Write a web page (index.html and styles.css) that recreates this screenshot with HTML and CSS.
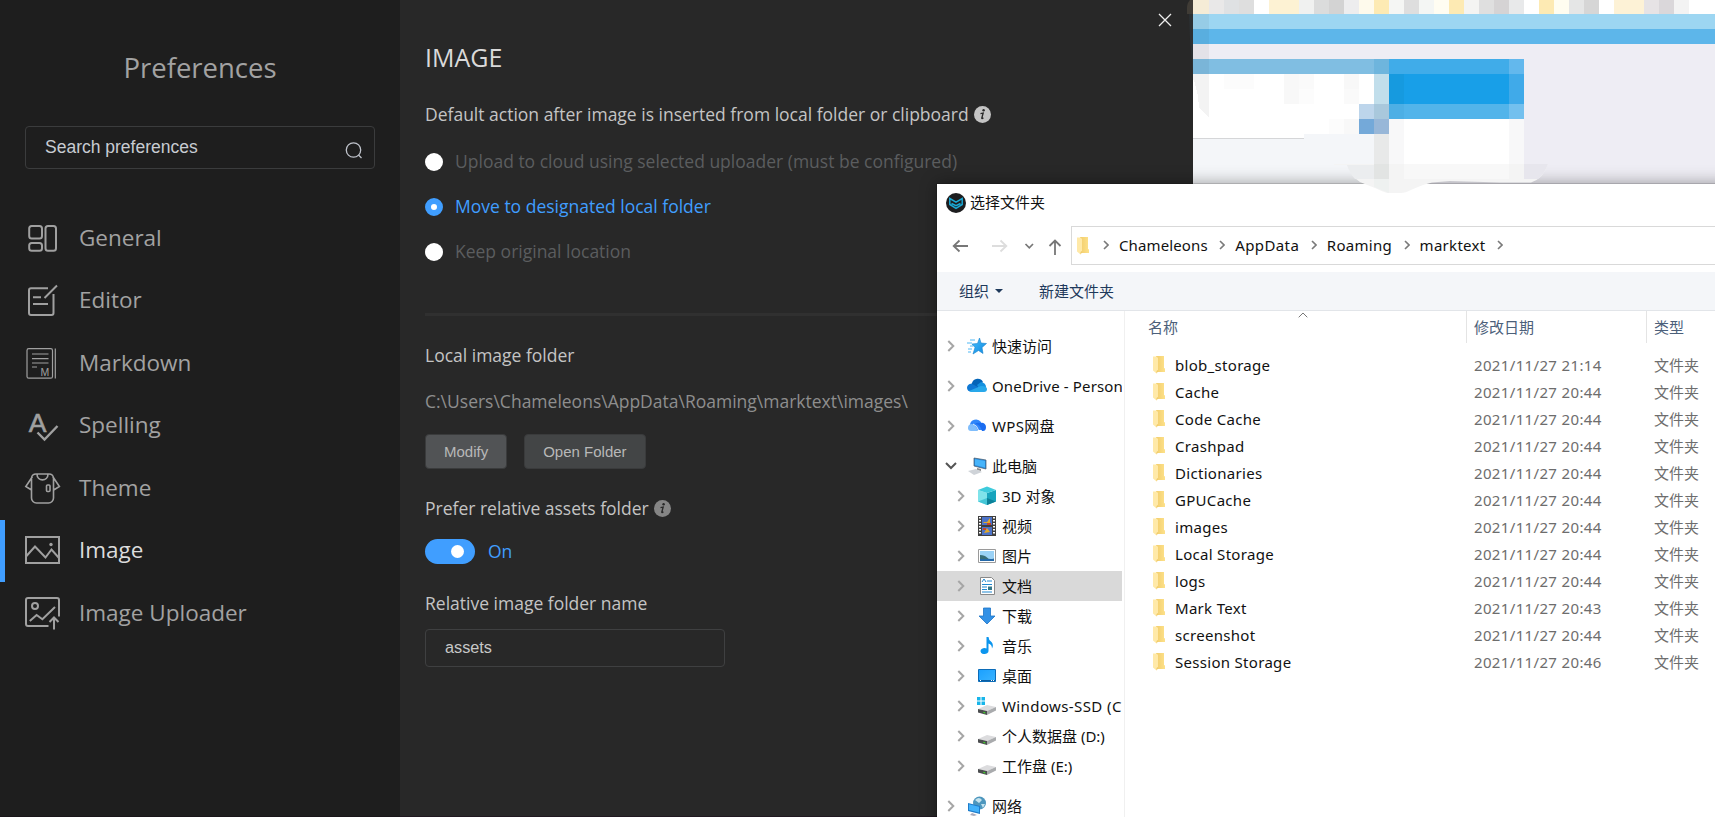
FILE: index.html
```html
<!DOCTYPE html>
<html lang="zh-CN">
<head>
<meta charset="utf-8">
<title>Preferences</title>
<link rel="stylesheet" href="styles.css">
</head>
<body>
<svg class="defs" aria-hidden="true">
  <defs>
    <linearGradient id="gf" x1="0" y1="0" x2="1" y2="0"><stop offset="0" stop-color="#f2cd6c"/><stop offset="1" stop-color="#fde18a"/></linearGradient>
    <linearGradient id="gs" x1="0" y1="0" x2="1" y2="1"><stop offset="0" stop-color="#45c0ff"/><stop offset="1" stop-color="#0f86dd"/></linearGradient>
    <linearGradient id="gd" x1="0" y1="0" x2="1" y2="1"><stop offset="0" stop-color="#1aa0ff"/><stop offset="1" stop-color="#3cb4ff"/></linearGradient>
  </defs>
  <symbol id="folder" viewBox="0 0 12 18"><path d="M3 0h8v12l1 .5V16H3z" fill="url(#gf)"/><path d="M0 0.5h3.5L5 2v12L3.500 17.500 0 14.500z" fill="#ffe9a8"/><path d="M3.500 15l1.500-1v1.500l-1.500 2z" fill="#f0cb6a"/></symbol>
  <symbol id="right" viewBox="0 0 8 12"><path d="M1.300 1l5 5-5 5" fill="none" stroke="currentColor" stroke-width="2"/></symbol>
  <symbol id="crumb" viewBox="0 0 6 10"><path d="M1 1l4 4-4 4" fill="none" stroke="#7a7a7a" stroke-width="1.600"/></symbol>
  <symbol id="drive" viewBox="0 0 20 20"><path d="M1 13l9-4 9 2-9 4z" fill="#dcdcde"/><path d="M1 13l9 2V19L1 16.500z" fill="#4b4d4f"/><path d="M10 15l9-4v3.500L10 19z" fill="#a9abad"/><path d="M6.300 15.700l2 .5v1.400l-2-.5z" fill="#42d62c"/></symbol>
  <symbol id="info" viewBox="0 0 17 17"><circle cx="8.500" cy="8.500" r="8.500" fill="currentColor"/><circle cx="9.600" cy="4.300" r="1.200" fill="#282828"/><path d="M6.500 7.600l2.700-.6-1.400 5q-.2 1.200 1.600-.3" fill="none" stroke="#282828" stroke-width="1.300"/></symbol>
</svg>

<div class="desktop">
  <aside class="sidebar">
    <h1 class="title">Preferences</h1>
    <div class="search"><span>Search preferences</span>
      <svg class="search-icon" viewBox="0 0 18 18"><circle cx="8.500" cy="8" r="7.200"/><path d="M13.500 13l3 3"/></svg>
    </div>
    <nav class="menu">
      <div class="item"><svg class="mi" viewBox="0 0 38 38"><rect x="5.200" y="7" width="12.800" height="12.500" rx="2.500"/><rect x="5.200" y="24" width="12.800" height="7.800" rx="2.500"/><rect x="21.500" y="7" width="10.500" height="24.800" rx="2.500"/></svg><span>General</span></div>
      <div class="item"><svg class="mi" viewBox="0 0 38 38"><path d="M24 6.200H7a2 2 0 0 0-2 2V31a2 2 0 0 0 2 2h20.500a2 2 0 0 0 2-2V12M20.500 16L33 3.500M9 15.200h8M9 22h15"/></svg><span>Editor</span></div>
      <div class="item"><svg class="mi thin" viewBox="0 0 38 38"><rect x="3" y="4.700" width="25.500" height="29.500" rx="1.800"/><path d="M31.300 4.500v30M8 10h16.500M8 14.700h16.500M8 19h16.500M8 23h5"/><text x="16.500" y="32" font-size="10.500">M</text></svg><span>Markdown</span></div>
      <div class="item"><svg class="mi" viewBox="0 0 38 38"><text x="4.700" y="24.500" font-size="26.500" class="spell">A</text><path d="M13.500 25.500l7 7L33.500 19" stroke-width="2.400"/></svg><span>Spelling</span></div>
      <div class="item"><svg class="mi mid" viewBox="0 0 38 38"><path d="M12 5h13q4 0 4.500 4v20a5 5 0 0 1-5 5h-12a5 5 0 0 1-5-5V9Q8 5 12 5zM8.500 7.500L1.800 17.500 7.500 21M28.700 7.500l6.700 10-5.700 3.500M13 5.200c0 7.500 11 7.500 11 0"/><rect x="22.500" y="16" width="3.500" height="6.500" rx="1"/></svg><span>Theme</span></div>
      <div class="item active"><svg class="mi" viewBox="0 0 38 38"><rect x="2" y="5" width="33" height="26"/><path d="M2 24.500L11 14.500l10.500 11 6-8L35 26"/><circle cx="27" cy="12.500" r="1.700" class="dot"/></svg><span>Image</span></div>
      <div class="item"><svg class="mi" viewBox="0 0 38 38"><path d="M24.500 32H4a2 2 0 0 1-2-2V6a2 2 0 0 1 2-2h29a2 2 0 0 1 2 2v16.500M5.800 27l6.800-6 5.800 4.300L31 13M30 35.500V23.500M25.500 28l4.500-4.500 4.500 4.500"/><circle cx="11" cy="12" r="3"/></svg><span>Image Uploader</span></div>
    </nav>
  </aside>

  <main class="main">
    <svg class="close" viewBox="0 0 14 14"><path d="M1 1l12 12M13 1L1 13"/></svg>
    <h2 class="heading">IMAGE</h2>
    <div class="label first"><span>Default action after image is inserted from local folder or clipboard</span><svg class="info light"><use href="#info"/></svg></div>
    <div class="radios">
      <div class="radio"><i></i><span>Upload to cloud using selected uploader (must be configured)</span></div>
      <div class="radio on"><i></i><span>Move to designated local folder</span></div>
      <div class="radio"><i></i><span>Keep original location</span></div>
    </div>
    <div class="rule"></div>
    <div class="label local">Local image folder</div>
    <div class="label path">C:\Users\Chameleons\AppData\Roaming\marktext\images\</div>
    <div class="buttons"><div class="btn hover">Modify</div><div class="btn">Open Folder</div></div>
    <div class="label prefer"><span>Prefer relative assets folder</span><svg class="info"><use href="#info"/></svg></div>
    <div class="toggle"><div class="switch"><i></i></div><span>On</span></div>
    <div class="label relative">Relative image folder name</div>
    <div class="input">assets</div>
  </main>

  <svg class="backdrop" viewBox="1193 0 522 184" shape-rendering="crispEdges">
    <rect x="1193" y="0" width="522" height="184" fill="#eeedf4"/>
    <g>
      <rect x="1193" width="16" height="14" fill="#f5ecd6"/><rect x="1209" width="15" height="14" fill="#e9e8e8"/><rect x="1224" width="15" height="14" fill="#dfe1e3"/><rect x="1239" width="15" height="14" fill="#dedede"/><rect x="1254" width="15" height="14" fill="#fff"/><rect x="1269" width="30" height="14" fill="#fdf2d3"/><rect x="1299" width="15" height="14" fill="#f0f1f0"/><rect x="1314" width="15" height="14" fill="#dbdcdc"/><rect x="1329" width="15" height="14" fill="#d3d3d3"/><rect x="1344" width="15" height="14" fill="#ededee"/><rect x="1359" width="15" height="14" fill="#fefaec"/><rect x="1374" width="15" height="14" fill="#fdeab3"/><rect x="1389" width="15" height="14" fill="#f5f6f4"/><rect x="1404" width="15" height="14" fill="#dedede"/><rect x="1419" width="15" height="14" fill="#f4f6f4"/><rect x="1434" width="15" height="14" fill="#fffdf2"/><rect x="1449" width="15" height="14" fill="#fdeab3"/><rect x="1464" width="15" height="14" fill="#f4f4f2"/><rect x="1479" width="15" height="14" fill="#dfdfdf"/><rect x="1494" width="15" height="14" fill="#d5d3d4"/><rect x="1509" width="15" height="14" fill="#e8e9ea"/><rect x="1524" width="15" height="14" fill="#fff"/><rect x="1539" width="15" height="14" fill="#fdeab3"/><rect x="1554" width="15" height="14" fill="#fffdf0"/><rect x="1569" width="15" height="14" fill="#e5e6e6"/><rect x="1584" width="15" height="14" fill="#d6d6d6"/><rect x="1599" width="15" height="14" fill="#fff"/><rect x="1614" width="30" height="14" fill="#fdf2d6"/><rect x="1644" width="15" height="14" fill="#e6e3e5"/><rect x="1659" width="15" height="14" fill="#dad7da"/><rect x="1674" width="15" height="14" fill="#f3f3f3"/><rect x="1689" width="26" height="14" fill="#fff"/>
    </g>
    <rect x="1193" y="14" width="522" height="15" fill="#9dd6f2"/><rect x="1193" y="14" width="16" height="15" fill="#96cce6"/>
    <rect x="1193" y="29" width="522" height="15" fill="#5db6ea"/><rect x="1193" y="29" width="16" height="15" fill="#59aedf"/>
    <rect x="1193" y="44" width="16" height="15" fill="#e3e2e8"/>
    <rect x="1193" y="59" width="181" height="15" fill="#80bee2"/><rect x="1193" y="59" width="16" height="15" fill="#7ab5d8"/><rect x="1374" y="59" width="15" height="15" fill="#6eb5dd"/>
    <rect x="1193" y="74" width="181" height="64" fill="#fff"/>
    <path d="M1193 80h1l4 16 1 12 10 10V74h-16z" fill="#f3f3f3"/>
    <path d="M1224 74h30v15h-30zM1299 89h15v15h-15zM1329 119h15v15h-15z" fill="#fcfcfc"/><path d="M1284 74h15v30h-15zM1344 74h15v15h-15zM1344 119h15v15h-15z" fill="#f8f8f8"/><path d="M1299 74h15v15h-15zM1344 89h15v15h-15z" fill="#fafafa"/>
    <rect x="1193" y="138" width="196" height="46" fill="#f4f6f9"/><rect x="1304" y="134" width="70" height="4" fill="#f4f6f9"/><rect x="1193" y="138" width="111" height="1" fill="#d5d6d8"/>
    <rect x="1374" y="74" width="15" height="30" fill="#c1deeb"/><rect x="1359" y="104" width="15" height="15" fill="#bdd5eb"/><rect x="1374" y="104" width="15" height="15" fill="#a9c8dc"/><rect x="1359" y="119" width="15" height="15" fill="#74a9d9"/><rect x="1374" y="119" width="15" height="15" fill="#98b7d8"/><rect x="1374" y="134" width="15" height="45" fill="#e8e9e9"/>
    <rect x="1389" y="59" width="120" height="15" fill="#40ace9"/><rect x="1389" y="74" width="120" height="30" fill="#189fe8"/><rect x="1389" y="74" width="15" height="30" fill="#169adf"/><rect x="1389" y="104" width="120" height="15" fill="#52b4ea"/><rect x="1389" y="104" width="15" height="15" fill="#4dafe5"/>
    <rect x="1509" y="59" width="15" height="15" fill="#63b8ed"/><rect x="1509" y="74" width="15" height="30" fill="#40aae9"/><rect x="1509" y="104" width="15" height="15" fill="#73c0ee"/>
    <rect x="1389" y="119" width="135" height="60" fill="#fff"/><rect x="1389" y="119" width="15" height="60" fill="#f8f8f9"/><rect x="1509" y="119" width="15" height="60" fill="#f8f8f9"/>
  </svg>

  <section class="dialog">
    <header class="titlebar"><svg class="logo" viewBox="0 0 20 20"><circle cx="10" cy="10" r="10" fill="#1d1d1f"/><path d="M3.800 5.500l6.200 3.700 6.200-3.700v6L10 15.300l-6.200-3.800zM5.500 10.500l4.500 2.200 4.500-2.200" fill="none" stroke="#1ba9d5" stroke-width="1.500"/></svg><span>选择文件夹</span></header>
    <div class="addressrow">
      <svg class="arrows" viewBox="0 0 134 38" fill="none"><path d="M31 20H16.500M22.500 14.500L16.700 20l5.800 5.500" stroke="#777" stroke-width="1.800"/><path d="M55 20h14.500M63.500 14.500l5.800 5.500-5.800 5.500" stroke="#ddd" stroke-width="1.800"/><path d="M88.500 18l3.800 3.800L96 18" stroke="#777" stroke-width="1.700"/><path d="M118 29V14.500M112.500 20l5.500-5.500 5.500 5.500" stroke="#777" stroke-width="1.800"/></svg>
      <div class="address"><svg class="folder"><use href="#folder"/></svg><svg class="crumb c0"><use href="#crumb"/></svg><span class="a1">Chameleons</span><svg class="crumb"><use href="#crumb"/></svg><span class="a2">AppData</span><svg class="crumb"><use href="#crumb"/></svg><span class="a3">Roaming</span><svg class="crumb"><use href="#crumb"/></svg><span class="a4">marktext</span><svg class="crumb"><use href="#crumb"/></svg></div>
    </div>
    <div class="toolbar"><span>组织</span><i class="tri"></i><span class="new">新建文件夹</span></div>
    <div class="body">
      <nav class="tree">
        <div class="node root"><svg class="exp"><use href="#right"/></svg><svg class="ti" viewBox="0 0 20 20"><path d="M3 4h5M0 7h5M3 10h3M1 13h4M1 16h3" stroke="#4fb8f5" stroke-width="1"/><path d="M12.500 2l1.500 5 5.500.5-4.500 4 1 6-4.500-3-5.500 3.500 2-6.500-3-3.500 5.500-.5z" fill="url(#gs)" stroke="#1582cc" stroke-width=".6"/></svg><span>快速访问</span></div>
        <div class="node root"><svg class="exp"><use href="#right"/></svg><svg class="ti" viewBox="0 0 20 20"><path d="M4 14.500A6 6 0 0 1 5 7a6 6 0 0 1 11-1l-5 5z" fill="#0364b8"/><path d="M0 12a4 4 0 0 1 5-4l8 4-5 3.500H4a4 4 0 0 1-4-3.500z" fill="#0f78d4"/><path d="M10 9l4-3q5 1 5 5l-6 3z" fill="#1490df"/><path d="M2 15l12-5q6 0 6 3a3 3 0 0 1-3 3H4z" fill="#28a8ea"/></svg><span class="od">OneDrive - Person</span></div>
        <div class="node root"><svg class="exp"><use href="#right"/></svg><svg class="ti" viewBox="0 0 20 20"><path d="M3 9a6 5.500 0 0 1 11-3l3 8H5z" fill="#2f86fa"/><path d="M1 12q0-4 4-4 4 1 6 7H4q-3 0-3-3z" fill="#7fbdfc"/><path d="M8 8q5 0 7 7h1q3 0 3-4a4 4 0 0 0-5-4q-4-1-6 1z" fill="#1a6cf0"/><path d="M6 8q4 1 6 7" fill="none" stroke="#fff" stroke-width=".8"/></svg><span class="wps">WPS网盘</span></div>
        <div class="node root"><svg class="exp open" viewBox="0 0 12 8"><path d="M1 1l5 5 5-5" fill="none" stroke="#555" stroke-width="2"/></svg><svg class="ti" viewBox="0 0 20 20"><path d="M7 2l12 2v9L7 10z" fill="#2a8fe0" stroke="#456" stroke-width=".7"/><path d="M8 3.200l10 1.700v6.500L8 9z" fill="#47b4fa"/><path d="M10 12l4 1v2l-4-1z" fill="#888"/><path d="M1 15l8-2 6 3-8 3z" fill="#cfd3d8"/></svg><span>此电脑</span></div>
        <div class="node"><svg class="exp"><use href="#right"/></svg><svg class="ti" viewBox="0 0 20 20"><path d="M1 4l9 3v12l-9-3.500z" fill="#7fe3ea"/><path d="M10 7l9-3v11.500L10 19z" fill="#18a4bd"/><path d="M1 4l9-3.500L19 4l-9 3z" fill="#3ecbdc"/><path d="M1 15.500l9-3.500v7z" fill="#45c6d6"/><path d="M10 12l9 3.500L10 19z" fill="#0c8199"/></svg><span>3D 对象</span></div>
        <div class="node"><svg class="exp"><use href="#right"/></svg><svg class="ti" viewBox="0 0 20 20"><path d="M1 0h18v20H1z" fill="#3f3f3f"/><path d="M5 1h10v8H5z" fill="#4c73c9"/><path d="M5 11h10v8H5z" fill="#4c73c9"/><path d="M6 6h4l3-4v5H7zM7 17l3-5 3 4z" fill="#e1a82b"/><path d="M10 7h4v2h-4zM6 12h3v2H6z" fill="#c7432d"/><path d="M3 1v18M17 1v18" stroke="#fff" stroke-width="2" stroke-dasharray="1.500 1.500"/></svg><span>视频</span></div>
        <div class="node"><svg class="exp"><use href="#right"/></svg><svg class="ti" viewBox="0 0 20 20"><path d="M1.500 3.500h17v13h-17z" fill="#fff" stroke="#9a9a9a"/><path d="M3 5h14v10H3z" fill="#9bd2f6"/><path d="M3 9q5 0 7 2.500t7 1V15H3z" fill="#386c76"/><path d="M3 13h14v2H3z" fill="#2468a8"/></svg><span>图片</span></div>
        <div class="node selected"><svg class="exp"><use href="#right"/></svg><svg class="ti" viewBox="0 0 20 20"><path d="M3.500 1.500h11l3 3v14h-14z" fill="#fff" stroke="#888"/><path d="M5 6l2-3 2 3M10 5h5M5 8.500h10M5 11h5M5 13.500h5M5 16h10" stroke="#2088d0" fill="none"/><path d="M11 10.500h4v3.500h-4z" fill="#378"/></svg><span>文档</span></div>
        <div class="node"><svg class="exp"><use href="#right"/></svg><svg class="ti" viewBox="0 0 20 20"><path d="M6.500 2h7v8H18l-8 8-8-8h4.500z" fill="#3391e6" stroke="#1d74c6" stroke-width=".8"/></svg><span>下载</span></div>
        <div class="node"><svg class="exp"><use href="#right"/></svg><svg class="ti" viewBox="0 0 20 20"><path d="M9.500 1h2q0 3 3 5 2.500 3 .5 6.500 0-4-3.500-5v7.500a4 3 0 1 1-2-2.500z" fill="#0b95ee"/></svg><span>音乐</span></div>
        <div class="node"><svg class="exp"><use href="#right"/></svg><svg class="ti" viewBox="0 0 20 20"><path d="M1.500 3.500h17v12h-17z" fill="url(#gd)" stroke="#0c6cb8"/><path d="M2 14.500h16" stroke="#0c5da0"/><path d="M3 14.500h1M14 14.500h1M16 14.500h1" stroke="#fff"/></svg><span>桌面</span></div>
        <div class="node"><svg class="exp"><use href="#right"/></svg><svg class="ti" viewBox="0 0 20 20"><use href="#drive"/><path d="M0 1h3.500v3.500H0zM4.500 1H8v3.500H4.500zM0 5.500h3.500V9H0zM4.500 5.500H8V9H4.500z" fill="#17b5ea"/></svg><span class="win">Windows-SSD (C</span></div>
        <div class="node"><svg class="exp"><use href="#right"/></svg><svg class="ti"><use href="#drive"/></svg><span>个人数据盘 (D:)</span></div>
        <div class="node last"><svg class="exp"><use href="#right"/></svg><svg class="ti"><use href="#drive"/></svg><span>工作盘 (E:)</span></div>
        <div class="node root"><svg class="exp"><use href="#right"/></svg><svg class="ti" viewBox="0 0 20 20"><circle cx="12.500" cy="7" r="6.500" fill="#4d96bd"/><path d="M8 4q4-4 7 0l-3 3zM14 8l4 0-2 4z" fill="#c5e3ee"/><path d="M1 7l12 3v8L1 15z" fill="#1e7cca"/><path d="M2 8.200l10 2.500v5.800L2 14z" fill="#43b2fa"/><path d="M5 17l5 2-3 1-4-1z" fill="#aab"/></svg><span>网络</span></div>
      </nav>
      <div class="list">
        <div class="head"><div class="h name">名称<svg class="caret" viewBox="0 0 10 6"><path d="M.7 5.300L5 1l4.300 4.300"/></svg></div><div class="h date">修改日期</div><div class="h type">类型</div></div>
        <div class="row"><svg class="folder"><use href="#folder"/></svg><span class="n">blob_storage</span><span class="d">2021/11/27 21:14</span><span class="t">文件夹</span></div>
        <div class="row"><svg class="folder"><use href="#folder"/></svg><span class="n">Cache</span><span class="d">2021/11/27 20:44</span><span class="t">文件夹</span></div>
        <div class="row"><svg class="folder"><use href="#folder"/></svg><span class="n">Code Cache</span><span class="d">2021/11/27 20:44</span><span class="t">文件夹</span></div>
        <div class="row"><svg class="folder"><use href="#folder"/></svg><span class="n">Crashpad</span><span class="d">2021/11/27 20:44</span><span class="t">文件夹</span></div>
        <div class="row"><svg class="folder"><use href="#folder"/></svg><span class="n">Dictionaries</span><span class="d">2021/11/27 20:44</span><span class="t">文件夹</span></div>
        <div class="row"><svg class="folder"><use href="#folder"/></svg><span class="n">GPUCache</span><span class="d">2021/11/27 20:44</span><span class="t">文件夹</span></div>
        <div class="row"><svg class="folder"><use href="#folder"/></svg><span class="n">images</span><span class="d">2021/11/27 20:44</span><span class="t">文件夹</span></div>
        <div class="row"><svg class="folder"><use href="#folder"/></svg><span class="n">Local Storage</span><span class="d">2021/11/27 20:44</span><span class="t">文件夹</span></div>
        <div class="row"><svg class="folder"><use href="#folder"/></svg><span class="n">logs</span><span class="d">2021/11/27 20:44</span><span class="t">文件夹</span></div>
        <div class="row"><svg class="folder"><use href="#folder"/></svg><span class="n">Mark Text</span><span class="d">2021/11/27 20:43</span><span class="t">文件夹</span></div>
        <div class="row"><svg class="folder"><use href="#folder"/></svg><span class="n">screenshot</span><span class="d">2021/11/27 20:44</span><span class="t">文件夹</span></div>
        <div class="row"><svg class="folder"><use href="#folder"/></svg><span class="n">Session Storage</span><span class="d">2021/11/27 20:46</span><span class="t">文件夹</span></div>
      </div>
    </div>
  </section>

  <svg class="smudge" viewBox="1186 0 374 196">
    <path d="M1187 14V8q0-5 3-8h3v14z" fill="#403c36"/><path d="M1189 14h4v66q-1-20-3-40z" fill="#2b3033"/>
    <path d="M1334 164h214q-4 14-17 18.500H1500l-50-1.500-18 1.500q-10 2-20 7-7 3.500-11 3.500h-14q-6-2-12-5-8-3-15-6-9-6-13-17h-13z" fill="#f4f4f4"/>
    <path d="M1404 164h105v15h-105z" fill="#f8f8f8"/>
    <path d="M1347 165h27v14h-19q-5-5-8-14z" fill="#ebedef"/><path d="M1374 164h15v15h-15z" fill="#e2e4e3"/><path d="M1374 179h15v14l-15-6z" fill="#eef1f0"/><path d="M1524 164h24q-4 11-10 15h-14z" fill="#e7e6ed"/>
  </svg>
</div>
</body>
</html>
```
FILE: styles.css
```css
* { box-sizing: border-box; margin: 0; padding: 0; }
body { width: 1715px; height: 817px; overflow: hidden; background: #282828; font-family: "Open Sans", sans-serif; }
.defs { position: absolute; width: 0; height: 0; }
svg { flex: none; display: block; }
.desktop { position: relative; display: flex; align-items: flex-start; width: 1715px; height: 817px; overflow: hidden; }

.sidebar { width: 400px; height: 817px; flex: none; background: #1e1e1e; padding-top: 48px; color: #a2a2a2; border-bottom: 1px solid #191519; }
.title { font-size: 27.5px; font-weight: 400; line-height: 40px; text-align: center; }
.search { display: flex; align-items: center; justify-content: space-between; margin: 38px 25px; width: 350px; height: 43px; padding: 0 11px 0 19px; border: 1px solid #3b3c3d; border-radius: 4px; font: 17.5px/20px "Liberation Sans", sans-serif; color: #c8ccd2; }
.search span { padding-bottom: 1px; }
.search-icon { width: 18px; height: 18px; margin-top: 6px; fill: none; stroke: #c0c4cc; stroke-width: 1.300; }
.item { display: flex; align-items: center; height: 62.5px; padding-left: 24px; gap: 17px; font-size: 22.5px; }
.item span { padding-bottom: 2px; }
.mi { width: 38px; height: 38px; fill: none; stroke: #a0a0a0; stroke-width: 2; }
.mi.thin { stroke-width: 1.200; }
.mi.mid { stroke-width: 1.600; }
.mi text { fill: #a0a0a0; stroke: none; font-family: "Liberation Sans", sans-serif; }
.mi .spell { stroke: #a0a0a0; stroke-width: .6; }
.mi .dot { fill: #a0a0a0; stroke: none; }
.active { color: #dcdcdc; background: linear-gradient(#409eff, #409eff) 0 0 / 5px 100% no-repeat; }

.main { position: relative; width: 793px; height: 817px; flex: none; background: #282828; padding: 42px 0 0 25px; color: #c4c4c4; font-size: 17.5px; border-bottom: 1px solid #201820; }
.close { position: absolute; left: 758px; top: 13px; width: 14px; height: 14px; stroke: #eee; stroke-width: 1.300; }
.heading { font-size: 25px; font-weight: 400; line-height: 31px; height: 32px; color: #dadada; }
.label { display: flex; align-items: center; gap: 5px; line-height: 30px; height: 30px; white-space: nowrap; }
.first { margin-top: 25px; }
.info { width: 17px; height: 17px; color: #858585; }
.info.light { color: #c4c4c4; }
.radios { margin-top: 10.5px; }
.radio { display: flex; align-items: center; height: 45px; gap: 12px; color: #5b5d5f; white-space: nowrap; }
.radio span { padding-bottom: 2px; }
.radio i { width: 18px; height: 18px; border-radius: 50%; background: #fff; }
.radio.on { color: #409eff; }
.radio.on i { border: 6.5px solid #409eff; }
.rule { margin-top: 38.5px; height: 3px; background: #303030; }
.local { margin-top: 24px; }
.path { margin-top: 16px; color: #8e8e8e; }
.buttons { display: flex; gap: 17px; margin-top: 18px; }
.btn { height: 35px; padding: 0 18px; border: 1px solid #3a3b3c; border-radius: 4px; background: #434546; font: 15px/33px "Liberation Sans", sans-serif; color: #b8b8b8; }
.btn.hover { background: #515355; }
.prefer { margin-top: 24px; }
.toggle { display: flex; align-items: center; gap: 13px; margin-top: 16px; height: 25px; color: #409eff; }
.toggle span { padding-bottom: 1px; }
.switch { display: flex; align-items: center; justify-content: flex-end; width: 50px; height: 25px; padding-right: 11px; border-radius: 13px; background: #409eff; }
.switch i { width: 13px; height: 13px; border-radius: 50%; background: #fff; }
.relative { margin-top: 24px; }
.input { margin-top: 11px; width: 300px; height: 38px; padding-left: 19px; border: 1px solid #3f4041; border-radius: 4px; font: 16.25px/34px "Liberation Sans", sans-serif; color: #c8c8c8; }

.backdrop { width: 522px; height: 184px; }
.smudge { position: absolute; left: 1186px; top: 0; width: 374px; height: 196px; }

.dialog { position: absolute; left: 937px; top: 184px; width: 800px; height: 660px; background: #fff; box-shadow: 0 0 0 1px rgba(0,0,0,.12), 0 0 16px rgba(0,0,0,.4); font: 15px/20px "Noto Sans", "Noto Sans CJK SC", sans-serif; color: #111; }
.titlebar { display: flex; align-items: center; height: 38px; padding: 0 0 2px 9px; gap: 4px; }
.logo { width: 20px; height: 20px; margin-top: 1px; }
.addressrow { display: flex; height: 50px; padding-top: 4px; }
.arrows { width: 134px; height: 38px; }
.address { display: flex; align-items: center; width: 700px; height: 39px; border: 1px solid #d9d9d9; padding-left: 5px; white-space: nowrap; }
.address span { padding-bottom: 2px; }
.a1 { letter-spacing: .12px; }
.a2 { letter-spacing: .4px; }
.a3, .a4 { letter-spacing: .3px; }
.folder { width: 12px; height: 18px; }
.crumb { width: 6px; height: 10px; margin: 0 10px 2px 11.5px; }
.crumb.c0 { margin-left: 14px; margin-right: 10px; }
.toolbar { display: flex; align-items: center; height: 39px; padding-left: 22px; background: #f4f6f9; border-bottom: 1px solid #e2e5e9; color: #1e395b; }
.tri { margin-left: 6px; border: 4px solid transparent; border-top-color: #1e395b; border-bottom: 0; }
.new { margin-left: 36px; }
.body { display: flex; }
.tree { width: 188px; flex: none; padding-top: 20px; border-right: 1px solid #f0f0f0; height: 560px; }
.node { display: flex; align-items: center; width: 185px; height: 30px; padding-left: 20px; overflow: hidden; white-space: nowrap; }
.node.root { padding-left: 10px; margin-bottom: 10px; }
.node.root:nth-child(4) { margin-bottom: 0; }
.node.last { margin-bottom: 10px; }
.node.selected { background: #d9d9d9; }
.exp { width: 8px; height: 12px; color: #a6a6a6; margin-right: 12px; }
.exp.open { width: 12px; height: 8px; margin: 0 10px 0 -2px; }
.ti { width: 20px; height: 20px; margin-right: 5px; }
.od { letter-spacing: .15px; }
.wps { letter-spacing: .3px; }
.win { letter-spacing: .4px; }
.head { display: flex; height: 32px; color: #4c607a; margin-bottom: 8px; }
.h { position: relative; line-height: 33px; border-right: 1px solid #e4e4e4; padding-left: 7px; }
.h.name { width: 342px; padding-left: 23px; }
.h.date { width: 180px; }
.h.type { border: 0; }
.caret { position: absolute; left: 173px; top: 1px; width: 10px; height: 6px; fill: none; stroke: #777; stroke-width: 1; }
.row { display: flex; align-items: center; height: 27px; padding-left: 28px; white-space: nowrap; }
.n { width: 299px; margin-left: 10px; letter-spacing: .3px; }
.d { width: 180px; color: #6d6d6d; letter-spacing: .35px; }
.t { color: #6d6d6d; }
```
